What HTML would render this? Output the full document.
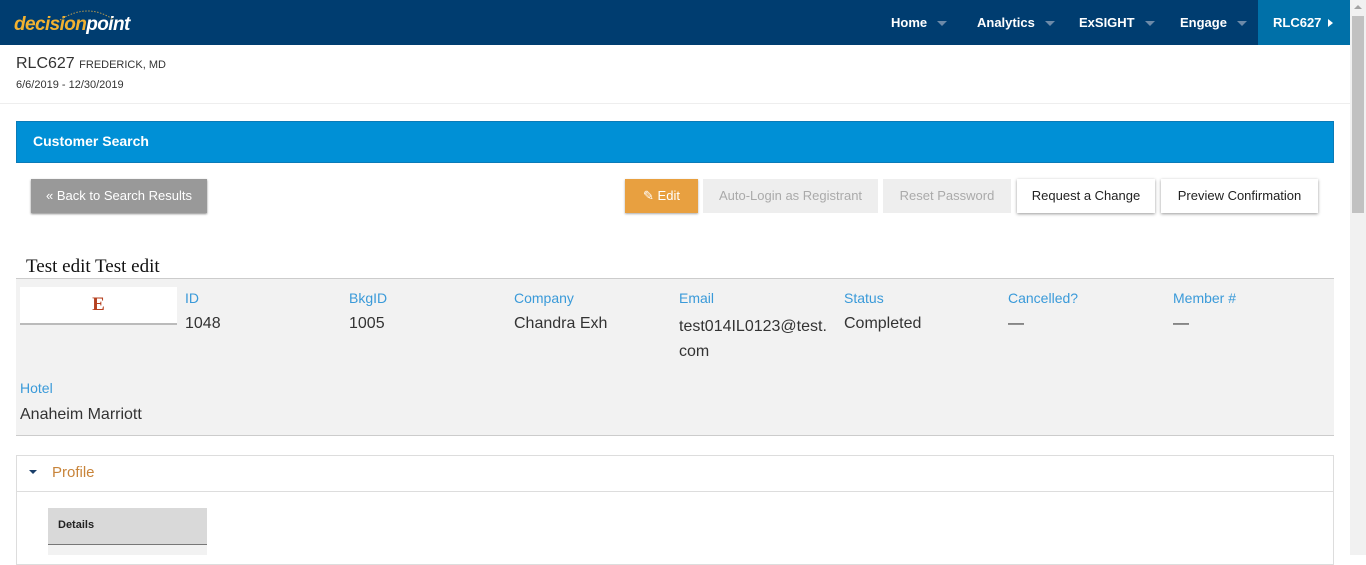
<!DOCTYPE html>
<html><head><style>
*{box-sizing:border-box;margin:0;padding:0}
body{width:1366px;height:555px;overflow:hidden;font-family:"Liberation Sans",Arial,sans-serif;background:#fff;position:relative;color:#333}
.a{position:absolute}
.nav{left:0;top:0;width:1350px;height:45px;background:#003d70}
.ni{top:15px;color:#fff;font-size:13px;font-weight:bold}
.tri{display:inline-block;width:0;height:0;border-left:5px solid transparent;border-right:5px solid transparent;border-top:5px solid #6d8aa8;margin-left:10px;vertical-align:middle}
.btn{top:179px;height:34px;font-size:13px;line-height:34px;text-align:center}
.lab{font-size:14px;color:#3a9ad9}
.val{font-size:16px;color:#333}
</style></head><body>
<div class="a nav"></div>
<div class="a" style="left:14px;top:14px;font-size:19px;font-style:italic;font-weight:bold;letter-spacing:-0.6px"><span style="color:#f2b230">decision</span><span style="color:#fff">point</span></div>
<svg class="a" style="left:58px;top:8px" width="60" height="14"><path d="M2 12 Q30 -6 56 12" fill="none" stroke="#b69a50" stroke-width="1" stroke-dasharray="1.5 1.5"/></svg>
<div class="a ni" style="left:891px">Home<span class="tri"></span></div>
<div class="a ni" style="left:977px">Analytics<span class="tri"></span></div>
<div class="a ni" style="left:1079px">ExSIGHT<span class="tri"></span></div>
<div class="a ni" style="left:1180px">Engage<span class="tri"></span></div>
<div class="a" style="left:1258px;top:0;width:92px;height:45px;background:#0070a8"></div>
<div class="a ni" style="left:1273px">RLC627 <span style="display:inline-block;border-top:4px solid transparent;border-bottom:4px solid transparent;border-left:5px solid #fff;margin-left:3px"></span></div>
<div class="a" style="left:1350px;top:0;width:16px;height:555px;background:#f1f1f1"></div>
<div class="a" style="left:1352px;top:16px;width:12px;height:197px;background:#c1c1c1"></div>
<div class="a" style="left:1354px;top:5px;border-left:4px solid transparent;border-right:4px solid transparent;border-bottom:4px solid #a3a3a3"></div>

<div class="a" style="left:16px;top:55px;font-size:16px;color:#333">RLC627 <span style="font-size:11px">FREDERICK, MD</span></div>
<div class="a" style="left:16px;top:79px;font-size:11px;color:#333">6/6/2019 - 12/30/2019</div>
<div class="a" style="left:0;top:103px;width:1350px;height:1px;background:#eee"></div>

<div class="a" style="left:16px;top:121px;width:1318px;height:42px;background:#0090d6;border:1px solid #0a7bb8"></div>
<div class="a" style="left:33px;top:133px;color:#fff;font-size:14px;font-weight:bold">Customer Search</div>

<div class="a btn" style="left:31px;width:176px;background:#999;color:#fff;box-shadow:0 1px 2px #888">« Back to Search Results</div>
<div class="a btn" style="left:625px;width:73px;background:#e8a040;color:#fff;box-shadow:0 1px 2px #aaa">✎ Edit</div>
<div class="a btn" style="left:703px;width:175px;background:#eee;color:#aaa">Auto-Login as Registrant</div>
<div class="a btn" style="left:883px;width:128px;background:#eee;color:#aaa">Reset Password</div>
<div class="a btn" style="left:1017px;width:138px;background:#fff;color:#222;box-shadow:0 1px 3px #999">Request a Change</div>
<div class="a btn" style="left:1161px;width:157px;background:#fff;color:#222;box-shadow:0 1px 3px #999">Preview Confirmation</div>

<div class="a" style="left:26px;top:256px;font-family:'Liberation Serif',serif;font-size:19px;color:#111">Test edit Test edit</div>
<div class="a" style="left:16px;top:278px;width:1318px;height:158px;background:#f2f2f2;border-top:1px solid #ccc;border-bottom:1px solid #ccc"></div>
<div class="a" style="left:20px;top:287px;width:157px;height:38px;background:#fff;border-bottom:2px solid #bbb;text-align:center;font-family:'Liberation Serif',serif;font-weight:bold;font-size:19px;color:#b5401f;line-height:36px">E</div>

<div class="a lab" style="left:185px;top:290px">ID</div><div class="a val" style="left:185px;top:315px">1048</div>
<div class="a lab" style="left:349px;top:290px">BkgID</div><div class="a val" style="left:349px;top:315px">1005</div>
<div class="a lab" style="left:514px;top:290px">Company</div><div class="a val" style="left:514px;top:315px">Chandra Exh</div>
<div class="a lab" style="left:679px;top:290px">Email</div><div class="a val" style="left:679px;top:314px;line-height:25px">test014IL0123@test.<br>com</div>
<div class="a lab" style="left:844px;top:290px">Status</div><div class="a val" style="left:844px;top:315px">Completed</div>
<div class="a lab" style="left:1008px;top:290px">Cancelled?</div><div class="a val" style="left:1008px;top:315px">—</div>
<div class="a lab" style="left:1173px;top:290px">Member #</div><div class="a val" style="left:1173px;top:315px">—</div>
<div class="a lab" style="left:20px;top:380px">Hotel</div><div class="a val" style="left:20px;top:406px">Anaheim Marriott</div>

<div class="a" style="left:16px;top:455px;width:1318px;height:110px;border:1px solid #ddd"></div>
<div class="a" style="left:16px;top:491px;width:1318px;height:1px;background:#ddd"></div>
<div class="a" style="left:29px;top:470px;border-left:4px solid transparent;border-right:4px solid transparent;border-top:4px solid #1a3f6a"></div>
<div class="a" style="left:52px;top:464px;font-size:15px;color:#c8843a">Profile</div>
<div class="a" style="left:48px;top:508px;width:159px;height:37px;background:#d9d9d9;border-bottom:1px solid #777"></div>
<div class="a" style="left:58px;top:519px;font-size:11px;font-weight:bold;color:#222">Details</div>
<div class="a" style="left:48px;top:545px;width:159px;height:10px;background:#f2f2f2"></div>
</body></html>
